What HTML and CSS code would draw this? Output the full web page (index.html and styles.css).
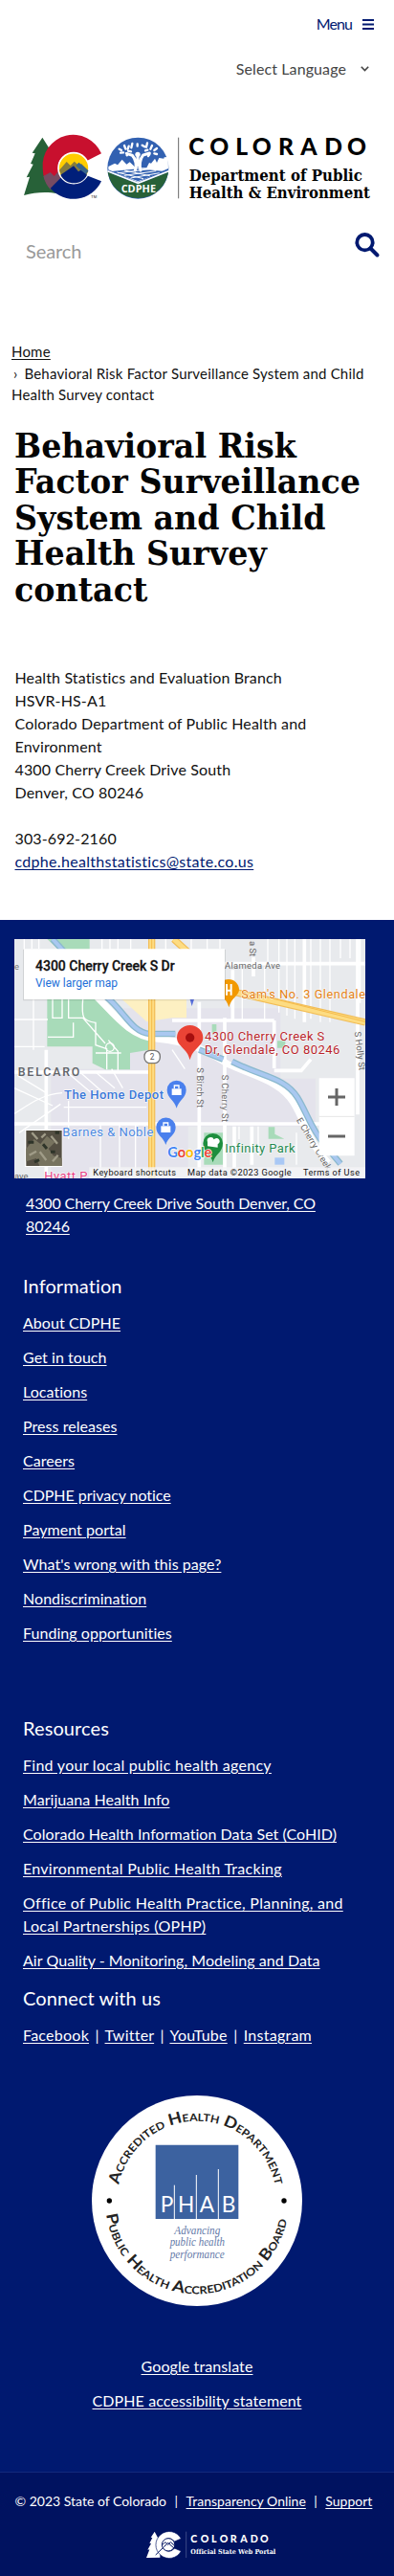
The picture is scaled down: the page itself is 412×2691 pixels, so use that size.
FILE: index.html
```html
<!DOCTYPE html>
<html lang="en">
<head>
<meta charset="utf-8">
<title>Behavioral Risk Factor Surveillance System and Child Health Survey contact</title>
<link rel="stylesheet" href="styles.css">
</head>
<body>
<header class="header">
  <div class="menu"><span>Menu</span>
    <svg class="menu-icon" viewBox="0 0 12 11"><path d="M0 1h12M0 5.5h12M0 10h12" stroke="currentColor" stroke-width="1.8"/></svg>
  </div>
  <div class="language">Select Language
    <svg class="chevron" viewBox="0 0 9 6"><path d="M.8.8l3.700 3.700L8.200.8" fill="none" stroke="currentColor" stroke-width="1.6"/></svg>
  </div>
  <svg class="logo" viewBox="75 430 1092 200" role="img" aria-label="Colorado Department of Public Health &amp; Environment">
    <path fill="#276138" d="M133 432l29 46-8 1 26 60v69c-30-7-71-5-105 5l18-58-10 2 21-41-8-2 14-32-9-2z"/>
    <path fill="#c8102e" d="M134 528a96 96 0 0 1 184-46l-50 25a45 45 0 1 0-61 59l-47 28a95 95 0 0 1-26-66z"/>
    <path fill="#764b62" d="M136 553l22-12 12 12 26-31 20 26-57 48a96 96 0 0 1-23-43z"/>
    <path fill="#001f7a" d="M158 591l49-49 61 7 50 20a96 96 0 0 1-160 22z"/>
    <circle cx="231" cy="528" r="48" fill="#ffcd00" stroke="#fff" stroke-width="5"/>
    <path fill="#857c3d" d="M186 534l23-26 12 12 12-13 17 15 5-8 22 22-10 20h-72z"/>
    <path fill="#38658b" d="M238 520l9-10 10 8 20 18-8 14z"/>
    <path fill="#001f7a" d="M190 549l41-28 15 18 7-5 20 15c-15 34-66 35-83 0z"/>
    <text x="286" y="621" class="sans" font-size="12" textLength="18">TM</text>
    <circle cx="433" cy="528" r="96" fill="#3261b1"/>
    <path fill="#276138" d="M338 540l95 38 95-38a96 96 0 0 1-190 0z"/>
    <path fill="#fff" d="M340 523l20-10 9 5 14-17 14 15 10-7 19 18h34l8-16 6 2 12-15 6 13 7-15 15 2 1-4 12-1 1 36-95 42-93-38z"/>
    <path d="M338 537l95 38 96-38" fill="none" stroke="#fff" stroke-width="5"/>
    <path d="M350 538l83-8 83 8-83 31z" fill="#3261b1"/>
    <path d="M370 543l100-12M390 551l100-14M410 559l90-16M470 552l-80-17M450 561l-83-20" stroke="#fff" stroke-width="3" fill="none"/>
    <path d="M424 535c5-14 3-35-9-47l-18-6M441 535c-4-14-3-35 8-48l20-6M432 520v-35" stroke="#fff" stroke-width="9" fill="none" stroke-linecap="round"/>
    <circle cx="432" cy="485" r="8" fill="#fff"/>
    <g stroke="#fff" stroke-width="7" stroke-linecap="round"><path d="M374 468l7 4M390 457l4 11M404 459l-3 9M415 451l-3 13M431 452v7M446 456l8 5M462 449l-3 13M477 457l-5 11M492 466l-8 6M378 480l9-1M398 488l3-5M484 482l8 2M465 490l4-5M402 474l9 2M456 473l7-2"/></g>
    <text x="380" y="604" class="sans" font-size="29" font-weight="700" fill="#fff" textLength="109" lengthAdjust="spacingAndGlyphs">CDPHE</text>
    <path d="M560 432v191" stroke="#666" stroke-width="3"/>
    <text y="486" x="592 658 739 791 873 943 1018 1089" class="geo" font-size="74" font-weight="900">COLORADO</text>
    <text x="593" y="569" class="slab" font-size="48" textLength="544" lengthAdjust="spacingAndGlyphs">Department of Public</text>
    <text x="593" y="623" class="slab" font-size="48" textLength="568" lengthAdjust="spacingAndGlyphs">Health &amp; Environment</text>
  </svg>
  <div class="search"><span>Search</span>
    <svg class="search-icon" viewBox="0 0 26 26"><circle cx="10.500" cy="10.200" r="8.200" fill="none" stroke="currentColor" stroke-width="3.800"/><path d="M16.500 16.500l7 7" stroke="currentColor" stroke-width="4" stroke-linecap="round"/></svg>
  </div>
</header>
<nav class="breadcrumb"><a href="#">Home</a><br><span class="sep">›</span>Behavioral Risk Factor Surveillance System and Child<br>Health Survey contact</nav>
<main class="main">
  <h1>Behavioral Risk<br>Factor Surveillance<br>System and Child<br>Health Survey<br>contact</h1>
  <address class="contact">Health Statistics and Evaluation Branch<br>HSVR-HS-A1<br>Colorado Department of Public Health and<br>Environment<br>4300 Cherry Creek Drive South<br>Denver, CO 80246<br><br>303-692-2160<br><a href="#">cdphe.healthstatistics@state.co.us</a></address>
</main>
<footer class="footer">
  <svg class="map" viewBox="45 33 1101 750">
    <path fill="#e8eaed" d="M45 33h1101v750H45z"/>
    <path fill="#e4e3ec" d="M380 250h500v220h110v150H590V783H160V440h220z"/>
    <path fill="#a8dbb9" d="M148 33h133v40h-90zM148 210h165c30 70 90 115 155 140v30l-60 10v52h-78l-40-20v-52H148z"/>
    <path fill="#fdf0c2" d="M370 210h215v70h-45l-80 12z"/>
    <path fill="#a8dbb9" d="M640 640h60v100h-60zM842 622h20v22l30 15h-50zM870 352h25v22h-25zM665 300h14v28h-14z"/>
    <path fill="#a9c8f5" d="M862 718h30v22h-30z"/>
    <g fill="none" stroke="#fff" stroke-width="4">
      <path d="M76 33v30M100 33v30M122 33v30M320 33v40M345 33v40M370 33v40M410 33v40M520 33v40M600 33v40M650 33v60M690 33v30M840 33v70M875 33v230M900 33v240M925 33v250M975 33v250M1005 33v260M1035 33v260M1068 33v60M1098 33v60M1130 33v200M760 120v170M830 120v165M45 285h105M45 370h95M105 210v170"/>
      <path d="M45 580c35-20 80-60 150-65M55 460l90 55M45 500l120 55M60 640l130-90M210 450l100 85M240 440l85 75M300 450l60 50M350 440l35 60M200 560h260M315 610v170M375 610v170M425 610v170M215 540v120M540 380l40 60M810 620v90M930 640v100M750 620v40"/>
      <path d="M165 220v60h30v-60M215 215v65h45l70 80M150 340h80v-45M260 220c-5 60 0 70 40 75v70l35 12v65M340 350l30 35v60M300 390h80"/>
      <circle cx="345" cy="372" r="13"/>
    </g>
    <g fill="none" stroke="#fff" stroke-width="11">
      <path d="M145 380v402M45 450h430M45 612h1000M540 288h320M625 230v550M705 280v500M795 90v60M700 110h446M955 33v260M1122 33v550M730 130v160M860 288v150M860 445h85l30-35M735 620v160M790 620v120"/>
    </g>
    <path d="M300 210c60 60 110 130 190 135 110 12 140 28 225 80 90 40 165 55 205 120 38 60 50 130 110 190" fill="none" stroke="#fff" stroke-width="21"/>
    <path d="M165 33l55 60M335 215c55 45 80 112 135 115h80M625 380l75 30M728 417c100 50 165 50 205 112 30 48 40 94 85 148l50 60" fill="none" stroke="#8bb9ce" stroke-width="20"/>
    <path d="M165 33l55 60M335 215c55 45 80 112 135 115h80M625 380l75 30M728 417c100 50 165 50 205 112 30 48 40 94 85 148l50 60" fill="none" stroke="#a9c8f0" stroke-width="12"/>
    <path d="M476 33v750M545 33l110 100 75 65 416 96" fill="none" stroke="#f2bd56" stroke-width="22"/>
    <path d="M476 33v750M545 33l110 100 75 65 416 96" fill="none" stroke="#fddc82" stroke-width="15"/>
    <path d="M476 33v750M700 180l446 112" stroke="#f5bb4b" stroke-width="3"/>
    <rect x="453" y="382" width="49" height="40" rx="18" fill="#fff" stroke="#777" stroke-width="4"/>
    <g class="map-text">
      <text x="470" y="411" font-size="25" fill="#555">2</text>
      <text x="45" y="130" font-size="28" fill="#777">e</text>
      <text x="705" y="125" font-size="28" fill="#666" textLength="174">Alameda Ave</text>
      <text x="56" y="461" font-size="37" font-weight="500" fill="#5f6368" textLength="194">BELCARO</text>
      <g font-size="28" fill="#666">
        <text transform="translate(783 39) rotate(90)">a St</text>
        <text transform="translate(618 436) rotate(90)" textLength="125">S Birch St</text>
        <text transform="translate(696 458) rotate(90)" textLength="148">S Cherry St</text>
        <text transform="translate(1112 324) rotate(83)" textLength="122">S Holly St</text>
        <text transform="translate(929 600) rotate(59)" textLength="186">E Cherry Creek</text>
        <text x="45" y="785">ave</text>
      </g>
    </g>
    <path d="M718 247c-6-30-34-37-34-55a33 33 0 1 1 66 0c0 18-25 25-32 55z" fill="#f29900"/>
    <path d="M711 174v35M725 174v35M711 194h14" stroke="#fff" stroke-width="6"/>
    <path d="M594 215h17l-9 28z" fill="#5870dc"/>
    <g class="map-text map-label">
      <text x="757" y="219" font-size="38" fill="#e37f13" textLength="389">Sam's No. 3 Glendale</text>
      <text x="642" y="350" font-size="39" fill="#b8242b" textLength="376">4300 Cherry Creek S</text>
      <text x="642" y="393" font-size="39" fill="#b8242b" textLength="424">Dr, Glendale, CO 80246</text>
      <text x="201" y="533" font-size="39" font-weight="500" fill="#3b78d8" textLength="312">The Home Depot</text>
      <text x="196" y="651" font-size="39" fill="#4b87df" textLength="285">Barnes &amp; Noble</text>
      <text x="706" y="703" font-size="39" fill="#24884f" textLength="220">Infinity Park</text>
      <text x="139" y="788" font-size="39" fill="#e83e83" textLength="135">Hyatt P</text>
    </g>
    <path d="M596 412c-8-37-41-43-41-70a41 39 0 1 1 82 0c0 27-33 33-41 70z" fill="#ea4335"/><circle cx="596" cy="342" r="14" fill="#a50e0e"/>
    <path d="M554 563c-6-25-30-32-30-57a30 30 0 1 1 60 0c0 25-24 32-30 57z" fill="#4a80ed"/>
    <path d="M539 502h30v20h-30z" fill="#fff"/><path d="M547 502v-10h14v10" fill="none" stroke="#fff" stroke-width="4"/>
    <path d="M520 678c-6-25-30-30-30-55a30 30 0 1 1 61 0c0 25-25 30-31 55z" fill="#4a80ed"/>
    <path d="M505 619h30v20h-30z" fill="#fff"/><path d="M513 619v-10h14v10" fill="none" stroke="#fff" stroke-width="4"/>
    <path d="M668 733c-6-25-31-31-31-60a31 31 0 1 1 62 0c0 29-25 35-31 60z" fill="#1e8e3e"/>
    <path d="M651 682v-13a10 10 0 1 1 20-8 10 10 0 1 1 12 15v10" fill="#fff"/>
    <text class="google" x="526" y="718" font-size="44" textLength="138"><tspan fill="#4285f4">G</tspan><tspan fill="#ea4335">o</tspan><tspan fill="#fbbc05">o</tspan><tspan fill="#4285f4">g</tspan><tspan fill="#34a853">l</tspan><tspan fill="#ea4335">e</tspan></text>
    <path fill="#f4f4f6" opacity=".8" d="M280 748h866v35H280z"/>
    <g class="map-text" font-size="27.500" fill="#111">
      <text x="292" y="773" textLength="260">Keyboard shortcuts</text>
      <text x="588" y="773" textLength="326">Map data ©2023 Google</text>
      <text x="951" y="773" textLength="177">Terms of Use</text>
    </g>
    <path d="M72 66h636v160H72z" fill="#000" opacity=".1"/>
    <path d="M75 64h630v158H75z" fill="#fff"/>
    <g class="map-text">
      <text x="111" y="132" font-size="42" font-weight="500" stroke="#111" stroke-width=".8" fill="#111" textLength="437">4300 Cherry Creek S Dr</text>
      <text x="111" y="183" font-size="36" fill="#2370d8" textLength="258">View larger map</text>
    </g>
    <path fill="#fff" d="M1001 469h111v243h-111zM78 630h118v117H78z"/>
    <path d="M1001 589h111" stroke="#e6e6e6" stroke-width="3"/>
    <path d="M1029 528h54M1056 501v54M1029 651h54" stroke="#666" stroke-width="9"/>
    <path fill="#544f43" d="M82 633h112v111H82z"/>
    <path fill="#77735f" d="M82 690l25-30 20 15 20-25 25 20-20 20 15 22 27 8v24h-70l-10-24-32 10z"/>
    <path d="M100 640l18 20M130 655l13-12M160 650l20 24M92 710l22-12M125 700l20 26M165 730l17-20" stroke="#a09c88" stroke-width="7"/>
    <path d="M88 670h18M135 676l12 14M108 732l15-7M173 640h13M159 700h14" stroke="#2e3429" stroke-width="9"/>
  </svg>
  <p class="place"><a href="#">4300 Cherry Creek Drive South Denver, CO<br>80246</a></p>
  <section class="links links-info">
    <h2>Information</h2>
    <ul>
      <li><a href="#">About CDPHE</a></li>
      <li><a href="#">Get in touch</a></li>
      <li><a href="#">Locations</a></li>
      <li><a href="#">Press releases</a></li>
      <li><a href="#">Careers</a></li>
      <li class="tight"><a href="#">CDPHE privacy notice</a></li>
      <li><a href="#">Payment portal</a></li>
      <li><a href="#">What's wrong with this page?</a></li>
      <li><a href="#">Nondiscrimination</a></li>
      <li><a href="#">Funding opportunities</a></li>
    </ul>
  </section>
  <section class="links links-resources">
    <h2>Resources</h2>
    <ul>
      <li class="loose"><a href="#">Find your local public health agency</a></li>
      <li><a href="#">Marijuana Health Info</a></li>
      <li><a href="#">Colorado Health Information Data Set (CoHID)</a></li>
      <li class="loose"><a href="#">Environmental Public Health Tracking</a></li>
      <li class="loose"><a href="#">Office of Public Health Practice, Planning, and<br>Local Partnerships (OPHP)</a></li>
      <li><a href="#">Air Quality - Monitoring, Modeling and Data</a></li>
    </ul>
  </section>
  <section class="links links-social">
    <h2>Connect with us</h2>
    <p><a href="#">Facebook</a> | <a href="#">Twitter</a> | <a href="#">YouTube</a> | <a href="#">Instagram</a></p>
  </section>
  <svg class="seal" viewBox="48 57 660 660">
    <defs><path id="top-arc" d="M133.100 337a250 250 0 0 1 489.800 0"/><path id="bottom-arc" d="M93.500 430a287 287 0 0 0 569 0"/></defs>
    <circle cx="378" cy="387" r="330" fill="#fff"/>
    <g class="seal-ring">
      <text font-size="49"><textPath href="#top-arc" textLength="685" lengthAdjust="spacingAndGlyphs">Accredited Health Department</textPath></text>
      <text font-size="49"><textPath href="#bottom-arc" textLength="808" lengthAdjust="spacingAndGlyphs">Public Health Accreditation Board</textPath></text>
    </g>
    <circle cx="103" cy="387" r="8"/><circle cx="651" cy="387" r="8"/>
    <path fill="#3c62a0" d="M248 212h260v232H248z"/>
    <path d="M307 338v106M376 306v138M445 288v156" stroke="#fff" stroke-width="3"/>
    <text class="geo" x="263 318 386 455" y="423" font-size="68" fill="#fff">PHAB</text>
    <g class="seal-motto" font-size="35">
      <text x="307" y="492" textLength="144" lengthAdjust="spacingAndGlyphs">Advancing</text>
      <text x="293" y="529" textLength="172" lengthAdjust="spacingAndGlyphs">public health</text>
      <text x="293" y="567" textLength="171" lengthAdjust="spacingAndGlyphs">performance</text>
    </g>
  </svg>
  <ul class="extra">
    <li><a href="#">Google translate</a></li>
    <li><a href="#">CDPHE accessibility statement</a></li>
  </ul>
</footer>
<div class="bottom">
  <p class="copyright"><span>© 2023 State of Colorado</span><span>|</span><a href="#">Transparency Online</a><span>|</span><a href="#">Support</a></p>
  <svg class="portal" viewBox="458 612 408 86">
    <path fill="#fff" d="M484 614l13 24-4 1 8 18v38l-43 1 10-26-6 1 11-20-5-1 9-17-5-1z"/>
    <path fill="#fff" stroke="#001260" stroke-width="2" d="M567 636a42 42 0 1 0 0 39l-21-9a20 20 0 1 1 0-21z"/>
    <circle cx="527" cy="655" r="20" fill="#fff" stroke="#001260" stroke-width="3"/>
    <path d="M487 687l26-25 13-13 20 18M508 656l9-9 9 8 8-8 12 10" fill="none" stroke="#001260" stroke-width="3"/>
    <path d="M583 614v82" stroke="#59659b" stroke-width="2"/>
    <text class="geo" x="597 628 662 688 721 753 784 815" y="648" font-size="32" font-weight="900" fill="#fff">COLORADO</text>
    <text class="slab" x="597" y="684" font-size="21" fill="#fff" textLength="267" lengthAdjust="spacingAndGlyphs">Official State Web Portal</text>
  </svg>
</div>
</body>
</html>
```

FILE: styles.css
```css
* { box-sizing: border-box; }
body {
  margin: 0;
  background: #fff;
  color: #111;
  font: 16px/24px Lato, "Open Sans", sans-serif;
  font-variant-ligatures: none;
}
p, h1, h2, ul { margin: 0; padding: 0; }
ul { list-style: none; }
a { color: inherit; text-underline-offset: 2px; text-decoration-skip-ink: auto; }
svg { display: block; overflow: visible; }
.sans { font-family: "Open Sans", sans-serif; }
.geo { font-family: Lato, sans-serif; }
.slab { font-family: "DejaVu Serif", serif; font-weight: 700; }

.header { height: 356px; padding-top: 13px; }
.menu, .language { display: flex; justify-content: flex-end; align-items: center; }
.menu { gap: 11px; padding-right: 21px; color: #001970; }
.menu span { letter-spacing: -.9px; }
.menu-icon { width: 12px; height: 11px; }
.language { gap: 15px; margin-top: 23px; padding-right: 26px; color: #444; letter-spacing: .1px; }
.chevron { width: 9px; height: 6px; }
.logo { width: 364px; height: 66.670px; margin: 59px 0 0 25px; }
.search { display: flex; justify-content: space-between; margin: 33px 15px 0 27px; color: #999; font-size: 20px; line-height: 30px; letter-spacing: -.1px; }
.search span { padding-top: 4px; }
.search-icon { width: 26px; height: 26px; color: #001970; }

.breadcrumb { padding-left: 12px; font-size: 15px; line-height: 22.500px; letter-spacing: .2px; }
.sep { padding: 0 7px 0 2px; }

.main { overflow: hidden; height: 537.500px; }
h1 {
  width: 430px;
  margin: 23px 0 0 15px;
  font: 700 36px/37.600px "DejaVu Serif", serif;
  color: #050505;
  transform: scaleX(.925);
  transform-origin: left;
}
.contact { margin: 62px 0 0 15.500px; font-style: normal; letter-spacing: .14px; }
.contact a { color: #001970; letter-spacing: .3px; }

.footer { height: 1621px; padding-top: 20px; background: #001970; color: #fff; }
.map { width: 367px; height: 250px; margin-left: 15px; overflow: hidden; }
.map-text { font-family: Roboto, sans-serif; }
.map-label text { stroke: #fff; stroke-width: 3px; paint-order: stroke; }
.google { font-family: Lato, sans-serif; font-weight: 700; stroke: #fff; stroke-width: 4px; paint-order: stroke; }
.place { margin: 14px 0 0 27px; letter-spacing: -.12px; }
.links { margin-left: 24px; letter-spacing: .05px; }
.links h2 { margin-bottom: 15px; font-size: 20px; line-height: 24px; font-weight: 400; letter-spacing: .1px; }
.links li + li, .extra li + li { margin-top: 12px; }
.loose { letter-spacing: .28px; }
.tight { letter-spacing: -.05px; }
.links-info { margin-top: 38px; }
.links-resources { margin-top: 75px; }
.links-social { margin-top: 15px; }
.links-social p { word-spacing: 2px; letter-spacing: .25px; }
.seal { width: 220px; height: 220px; margin: 51px auto 0; }
.seal-ring { font-family: Lato, sans-serif; font-weight: 700; font-variant: small-caps; fill: #222; }
.seal-motto { font-family: "Liberation Serif", serif; font-style: italic; fill: #6479a8; }
.extra { margin-top: 51px; text-align: center; letter-spacing: .1px; }

.bottom { height: 109px; padding-top: 19px; border-top: 1px solid #14297c; background: #001260; color: #fff; }
.copyright { display: flex; gap: 8.500px; padding-left: 15.500px; font-size: 14px; line-height: 21px; white-space: nowrap; }
.portal { width: 136px; height: 28.670px; margin: 21px 0 0 152.500px; }
```
